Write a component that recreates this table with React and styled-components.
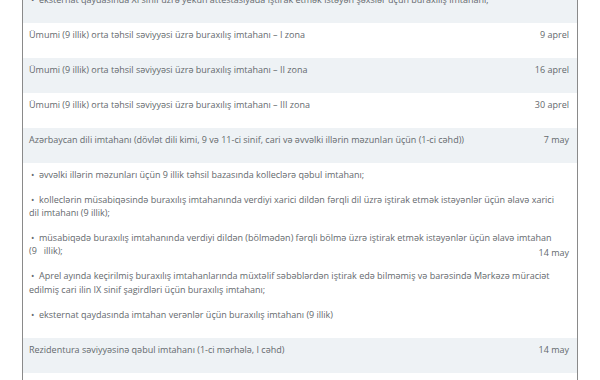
import React from "react";
import styled, { createGlobalStyle } from "styled-components";

const Global = createGlobalStyle`
  html, body { margin: 0; padding: 0; background: #fff; }
  body { font-family: "Open Sans", "Noto Sans", sans-serif; overflow: hidden; }
`;

const Page = styled.div`
  width: 600px;
  height: 380px;
  overflow: hidden;
  background: #fff;
`;

const Table = styled.table`
  margin: -12px 0 0 22px;
  width: 556px;
  table-layout: fixed;
  border-collapse: collapse;
  border-left: 1px solid #8a8a8a;
  border-right: 1px solid #8a8a8a;
  font-size: 9px;
  line-height: 13.3px;
  color: #64696d;
`;

const DateCol = styled.col`
  width: 52px;
`;

const Row = styled.tr`
  background: ${(p) => (p.$shade ? "#eef2f5" : "#ffffff")};
`;

const TextCell = styled.td`
  padding: 5px 0 5px 6px;
  vertical-align: middle;
  text-align: left;
`;

const DateCell = styled.td`
  padding: ${(p) => (p.$bare ? "9px 8px 5px 0" : "5px 8px 5px 0")};
  vertical-align: middle;
  text-align: right;
  white-space: nowrap;
`;

const Para = styled.p`
  margin: 0 0 11.7px;
  white-space: nowrap;
`;

const Bullet = styled.span`
  display: inline-block;
  width: 8px;
  padding-left: 2px;
`;

const B = "•";

const rows = [
  { shade: true, paras: [[B, "eksternat qaydasında XI sinif üzrə yekun attestasiyada iştirak etmək istəyən şəxslər üçün buraxılış imtahanı;"]], date: "" },
  { shade: false, paras: [[null, "Ümumi (9 illik) orta təhsil səviyyəsi üzrə buraxılış imtahanı – I zona"]], date: "9 aprel" },
  { shade: true, paras: [[null, "Ümumi (9 illik) orta təhsil səviyyəsi üzrə buraxılış imtahanı – II zona"]], date: "16 aprel" },
  { shade: false, paras: [[null, "Ümumi (9 illik) orta təhsil səviyyəsi üzrə buraxılış imtahanı – III zona"]], date: "30 aprel" },
  { shade: true, paras: [[null, "Azərbaycan dili imtahanı (dövlət dili kimi, 9 və 11-ci sinif, cari və əvvəlki illərin məzunları üçün (1-ci cəhd))"]], date: "7 may" },
  {
    shade: false,
    bare: true,
    paras: [
      [B, "əvvəlki illərin məzunları üçün 9 illik təhsil bazasında kolleclərə qəbul imtahanı;"],
      [B, "kolleclərin müsabiqəsində buraxılış imtahanında verdiyi xarici dildən fərqli dil üzrə iştirak etmək istəyənlər üçün əlavə xarici", "dil imtahanı (9 illik);"],
      [B, "müsabiqədə buraxılış imtahanında verdiyi dildən (bölmədən) fərqli bölmə üzrə iştirak etmək istəyənlər üçün əlavə imtahan", "(9\u00a0\u00a0\u00a0illik);"],
      [B, "Aprel ayında keçirilmiş buraxılış imtahanlarında müxtəlif səbəblərdən iştirak edə bilməmiş və barəsində Mərkəzə müraciət", "edilmiş cari ilin IX sinif şagirdləri üçün buraxılış imtahanı;"],
      [B, "eksternat qaydasında imtahan verənlər üçün buraxılış imtahanı (9 illik)"],
    ],
    date: "14 may",
  },
  { shade: true, paras: [[null, "Rezidentura səviyyəsinə qəbul imtahanı (1-ci mərhələ, I cəhd)"]], date: "14 may" },
  { shade: false, paras: [[null, "Ümumi (11 illik) orta təhsil səviyyəsi üzrə buraxılış imtahanı"]], date: "21 may" },
];

export default function App() {
  return (
    <Page>
      <Global />
      <Table>
        <colgroup>
          <col />
          <DateCol />
        </colgroup>
        <tbody>
          {rows.map((r, i) => (
            <Row key={i} $shade={r.shade}>
              <TextCell>
                {r.paras.map(([bullet, first, ...rest], j) => (
                  <Para key={j}>
                    {bullet && <Bullet>{bullet}</Bullet>}
                    {first}
                    {rest.map((line, k) => (
                      <React.Fragment key={k}>
                        <br />
                        {line}
                      </React.Fragment>
                    ))}
                  </Para>
                ))}
              </TextCell>
              <DateCell $bare={r.bare}>{r.bare ? r.date : <Para>{r.date || "\u00a0"}</Para>}</DateCell>
            </Row>
          ))}
        </tbody>
      </Table>
    </Page>
  );
}
